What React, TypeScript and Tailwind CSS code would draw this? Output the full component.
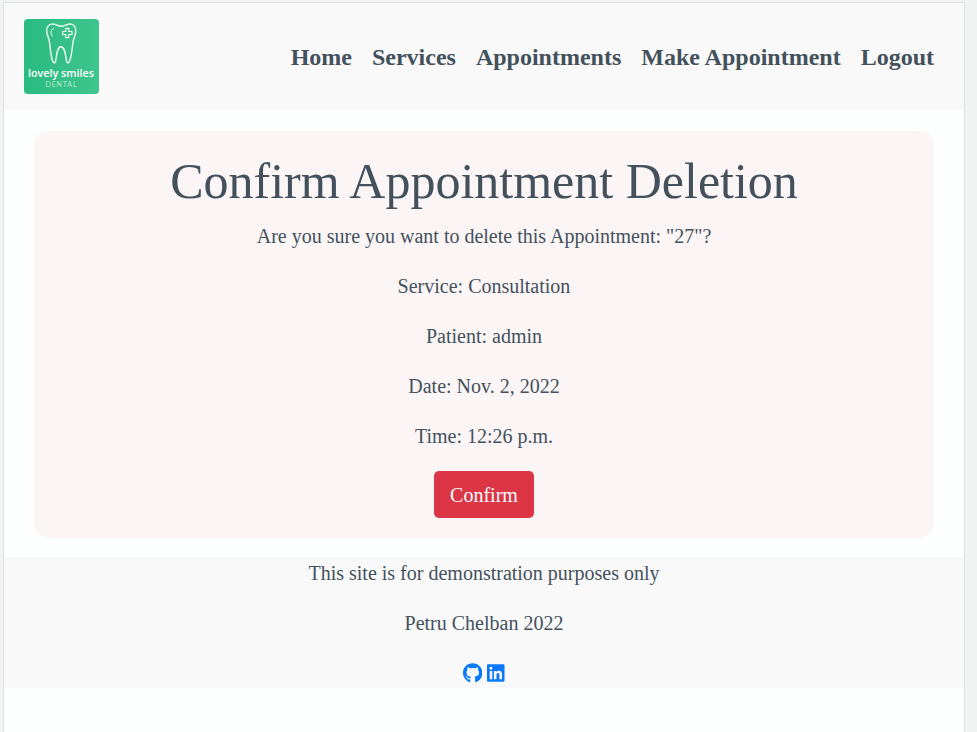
import React from "react";
import { FaGithub, FaLinkedin } from "react-icons/fa";

const links = ["Home", "Services", "Appointments", "Make Appointment", "Logout"];
const details = [
  'Are you sure you want to delete this Appointment: "27"?',
  "Service: Consultation",
  "Patient: admin",
  "Date: Nov. 2, 2022",
  "Time: 12:26 p.m.",
];

function Logo() {
  return (
    <svg className="h-[75px] w-[75px] rounded" viewBox="0 0 75 75">
      <defs>
        <linearGradient id="green" x1="0" y1="0" x2="1" y2="0">
          <stop offset="0" stopColor="#2abb81" />
          <stop offset="1" stopColor="#3fc48e" />
        </linearGradient>
      </defs>
      <rect width="75" height="75" fill="url(#green)" />
      <g fill="none" stroke="#effcf6" strokeWidth="1.4" strokeLinecap="round" strokeLinejoin="round">
        <path d="M37.3 7.2C34.3 7.2 31.4 4.9 28.5 4.9C24.7 5 22.6 8.4 22.7 12C22.8 15.8 24.6 18.2 25.3 22C26.4 28 26.4 38 29.1 43C29.9 44.5 31.3 44 31.6 42.5C32.7 37 32.8 27.8 37 27.8C41.2 27.8 41.4 37 42.7 42.5C43.1 44 44.4 44.5 45.1 43C48 38 48 28 49.2 22C50 18.2 51.7 15.8 51.8 12C51.9 8.4 49.8 5 46.2 4.9C43.2 4.9 40.3 7.2 37.3 7.2Z" />
        <path strokeWidth="1" d="M29.6 9.7C26.6 10.5 26.1 13.7 28.2 17.2" />
        <path strokeWidth="1.2" d="M41.8 9.3h3v3.2h3.2v3h-3.2v3.2h-3v-3.2h-3.2v-3h3.2Z" />
      </g>
      <text x="37" y="58" textAnchor="middle" textLength="66" lengthAdjust="spacingAndGlyphs" className="fill-white font-['Open_Sans',sans-serif] text-[11px] font-semibold">lovely smiles</text>
      <text x="37" y="67.7" textAnchor="middle" textLength="31" className="fill-[#b5ebd1] font-[Lato,sans-serif] text-[7px]">DENTAL</text>
    </svg>
  );
}

export default function App() {
  return (
    <div className="h-[732px] overflow-hidden bg-[#f1f3f3] pl-[3px] pt-0.5 font-['Liberation_Serif',serif] text-[20px] leading-[30px] text-[#43515c]">
      <div className="h-[730px] w-[962px] border-x border-t border-[#dfe1e1] bg-[#fdfffe]">
        <header className="flex h-[107px] items-center justify-between bg-[#f9f9f9] pl-5 pr-[30px]">
          <Logo />
          <nav className="flex gap-5 text-[24px] font-bold leading-9">
            {links.map((link) => (
              <a key={link} href="#">{link}</a>
            ))}
          </nav>
        </header>
        <main className="mx-[30px] mt-[21px] h-[407px] rounded-[14px] bg-[#fcf5f6] pt-5 text-center">
          <h1 className="mb-2.5 text-[50px] leading-[60px]">Confirm Appointment Deletion</h1>
          {details.map((line) => (
            <p key={line} className="mb-5">{line}</p>
          ))}
          <button className="mx-auto block h-[47px] w-[100px] rounded-[5px] bg-[#dc3545] text-white">Confirm</button>
        </main>
        <footer className="mt-[19px] h-[131px] bg-[#f9f9f9] pt-px text-center">
          <p className="mb-5">This site is for demonstration purposes only</p>
          <p className="mb-5">Petru Chelban 2022</p>
          <div className="flex h-[30px] justify-center gap-[5px] pt-[4.5px] text-[#0879fb]">
            <FaGithub className="h-5 w-[19.4px]" />
            <FaLinkedin className="h-5 w-[17.5px]" />
          </div>
        </footer>
      </div>
    </div>
  );
}
